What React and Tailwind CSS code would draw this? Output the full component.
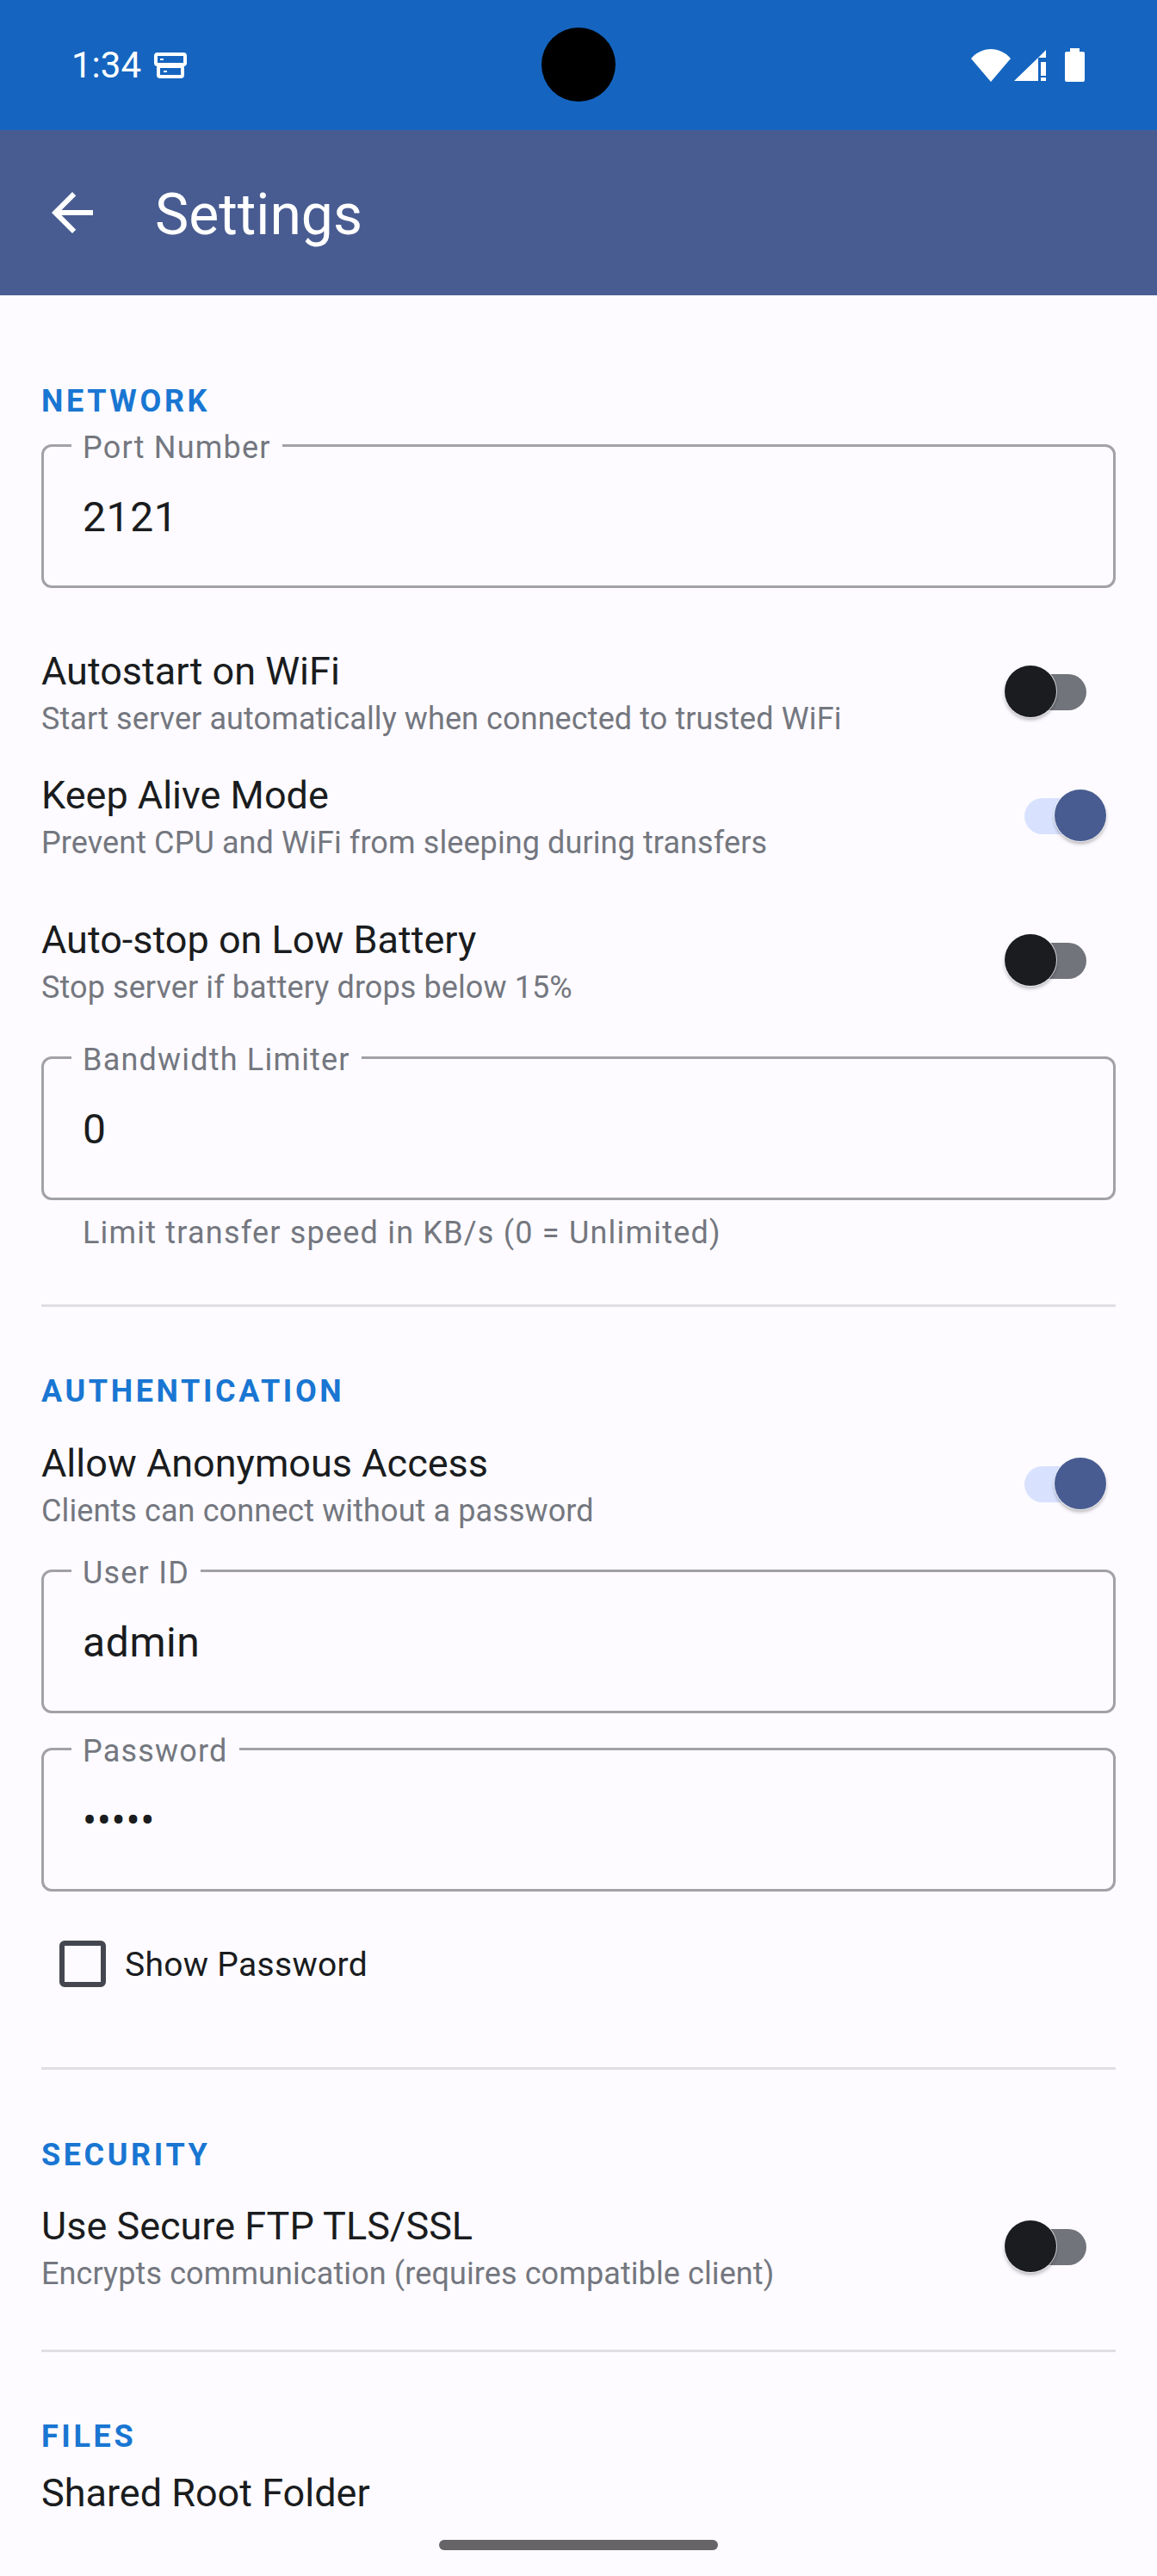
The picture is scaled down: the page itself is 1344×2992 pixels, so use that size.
import { MdArrowBack } from "react-icons/md";

function SectionTitle({ children, className }) {
    return (
        <h2 className={`text-[36px] leading-[48px] font-bold tracking-[3.6px] text-[#1976d2] ${className}`}>
            {children}
        </h2>
    );
}

function Switch({ on }) {
    if (on) {
        return (
            <div className="relative w-[95px] h-[60px] mt-[21px] mr-[11px] shrink-0">
                <div className="absolute left-0 right-[12px] top-[10px] h-[42px] rounded-full bg-[#d8e2ff]"></div>
                <div className="absolute right-0 top-0 w-[60px] h-[60px] rounded-full bg-[#485c91] shadow-[0_0_0_1px_rgba(255,255,255,0.7),0_3px_4px_rgba(0,0,0,0.3)]"></div>
            </div>
        );
    }
    return (
        <div className="relative w-[95px] h-[60px] mt-[21px] mr-[34px] shrink-0">
            <div className="absolute left-[20px] right-0 top-[10px] h-[42px] rounded-full bg-[#72747c]"></div>
            <div className="absolute left-0 top-0 w-[60px] h-[60px] rounded-full bg-[#1a1c20] shadow-[0_0_0_1px_rgba(255,255,255,0.7),0_3px_4px_rgba(0,0,0,0.3)]"></div>
        </div>
    );
}

function SettingRow({ title, subtitle, on, className }) {
    return (
        <div className={`flex items-start justify-between h-[110px] ${className}`}>
            <div>
                <div className="text-[45px] leading-[56px] text-[#1a1c1e]">{title}</div>
                <div className="text-[36px] leading-[54px] tracking-[0.1px] text-[#74777f]">{subtitle}</div>
            </div>
            <Switch on={on} />
        </div>
    );
}

function OutlinedField({ label, value, className }) {
    return (
        <div className={`relative h-[167px] border-[3px] border-[#a2a2a6] rounded-[12px] flex items-center pl-[45px] pt-[3px] ${className}`}>
            <span className="absolute left-[32px] top-[-20px] bg-[#fdfbff] px-[13px] text-[36px] leading-[42px] tracking-[1.2px] text-[#74777f]">
                {label}
            </span>
            <span className="text-[48px] leading-[56px] tracking-[0.6px] text-[#1a1c1e]">{value}</span>
        </div>
    );
}

function Divider({ className }) {
    return <div className={`h-[3px] bg-[#e0dee2] ${className}`}></div>;
}

function StatusBar() {
    return (
        <div className="relative h-[151px] bg-[#1565c0] flex items-center justify-between pl-[83px] pr-[84px] text-white">
            <div className="flex items-center gap-[15px]">
                <span className="text-[42px] leading-[48px]">1:34</span>
                <svg width="38" height="30" viewBox="0 0 38 30" fill="none" stroke="white" strokeWidth="4">
                    <rect x="2" y="2" width="34" height="12" rx="2" />
                    <rect x="5" y="16" width="28" height="12" rx="2" />
                    <path d="M7 8h4M11 22h4" strokeWidth="2" />
                </svg>
            </div>
            <div className="flex items-center">
                <svg width="46" height="38" viewBox="0 0 46 38" fill="white">
                    <path d="M23 38L0 11C6 4 14 0 23 0s17 4 23 11z" />
                </svg>
                <svg className="ml-[4px]" width="37" height="38" viewBox="0 0 37 38" fill="white">
                    <path d="M0 37L28 10V37zM37 1V10H28zM31 15h6v16h-6zM31 33h6v4h-6z" />
                </svg>
                <svg className="ml-[22px]" width="23" height="39" viewBox="0 0 23 39" fill="white">
                    <path d="M6 0h11v4h4a2 2 0 0 1 2 2v31a2 2 0 0 1-2 2H2a2 2 0 0 1-2-2V6a2 2 0 0 1 2-2h4z" />
                </svg>
            </div>
            <div className="absolute left-[629px] top-[32px] w-[86px] h-[86px] rounded-full bg-black"></div>
        </div>
    );
}

export default function App() {
    return (
        <div
            className="relative w-[1344px] h-[2992px] overflow-hidden bg-[#fdfbff]"
            style={{ fontFamily: "Roboto, sans-serif" }}
        >
            <StatusBar />

            <div className="h-[192px] bg-[#485c91] flex items-center pl-[48px] text-white">
                <MdArrowBack size={72} />
                <h1 className="ml-[60px] pt-[6px] text-[66px] leading-[78px]">Settings</h1>
            </div>

            <div className="px-[48px]">
                <SectionTitle className="mt-[99px]">NETWORK</SectionTitle>
                <OutlinedField className="mt-[26px]" label="Port Number" value="2121" />

                <SettingRow
                    className="mt-[69px]"
                    title="Autostart on WiFi"
                    subtitle="Start server automatically when connected to trusted WiFi"
                />
                <SettingRow
                    className="mt-[34px]"
                    title="Keep Alive Mode"
                    subtitle="Prevent CPU and WiFi from sleeping during transfers"
                    on
                />
                <SettingRow
                    className="mt-[58px]"
                    title="Auto-stop on Low Battery"
                    subtitle="Stop server if battery drops below 15%"
                />

                <OutlinedField className="mt-[53px]" label="Bandwidth Limiter" value="0" />
                <div className="mt-[14px] pl-[48px] text-[36px] leading-[48px] tracking-[1.2px] text-[#74777f]">
                    Limit transfer speed in KB/s (0 = Unlimited)
                </div>

                <Divider className="mt-[59px]" />

                <SectionTitle className="mt-[74px]">AUTHENTICATION</SectionTitle>
                <SettingRow
                    className="mt-[32px]"
                    title="Allow Anonymous Access"
                    subtitle="Clients can connect without a password"
                    on
                />
                <OutlinedField className="mt-[41px]" label="User ID" value="admin" />
                <OutlinedField className="mt-[40px]" label="Password" value="•••••" />

                <div className="mt-[57px] ml-[21px] flex items-start">
                    <div className="w-[54px] h-[54px] border-[6px] border-[#44474f] rounded-[6px]"></div>
                    <span className="ml-[22px] pt-[2px] text-[39px] leading-[52px] tracking-[0.3px] text-[#1a1c1e]">Show Password</span>
                </div>

                <Divider className="mt-[93px]" />

                <SectionTitle className="mt-[75px]">SECURITY</SectionTitle>
                <SettingRow
                    className="mt-[31px]"
                    title="Use Secure FTP TLS/SSL"
                    subtitle="Encrypts communication (requires compatible client)"
                />

                <Divider className="mt-[61px]" />

                <SectionTitle className="mt-[74px]">FILES</SectionTitle>
                <div className="mt-[14px] text-[45px] leading-[56px] text-[#1a1c1e]">Shared Root Folder</div>
            </div>

            <div className="absolute left-[510px] top-[2950px] w-[324px] h-[12px] rounded-full bg-[#666467]"></div>
        </div>
    );
}
